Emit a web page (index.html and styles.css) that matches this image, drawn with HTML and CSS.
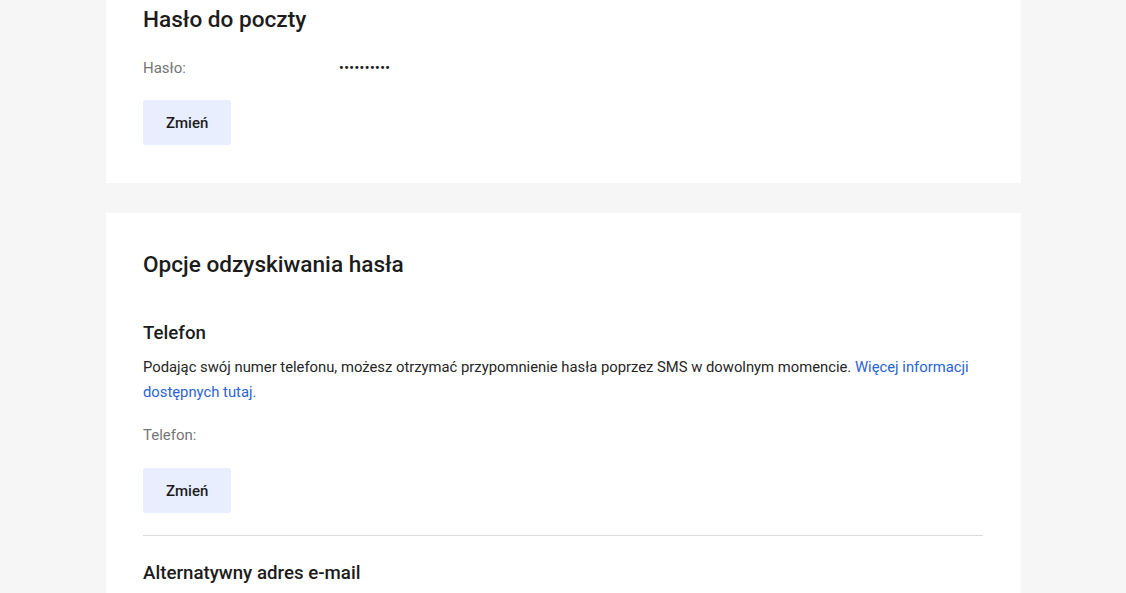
FILE: index.html
```html
<!DOCTYPE html>
<html lang="pl">
<head>
<meta charset="utf-8">
<title>Ustawienia</title>
<link rel="stylesheet" href="styles.css">
</head>
<body>
<main class="page">
  <section class="card card-first">
    <h2 class="card-title">Hasło do poczty</h2>
    <div class="field">
      <span class="field-label">Hasło:</span>
      <span class="field-value dots">••••••••••</span>
    </div>
    <button class="btn" type="button">Zmień</button>
  </section>

  <section class="card">
    <h2 class="card-title">Opcje odzyskiwania hasła</h2>
    <div class="option">
      <h3 class="option-title">Telefon</h3>
      <p class="option-text">Podając swój numer telefonu, możesz otrzymać przypomnienie hasła poprzez SMS w dowolnym momencie. <a class="link" href="#">Więcej informacji dostępnych tutaj.</a></p>
      <div class="field field-spaced">
        <span class="field-label">Telefon:</span>
        <span class="field-value"></span>
      </div>
      <button class="btn" type="button">Zmień</button>
    </div>
    <hr class="divider">
    <div class="option">
      <h3 class="option-title">Alternatywny adres e-mail</h3>
    </div>
  </section>
</main>
</body>
</html>
```

FILE: styles.css
```css
* { box-sizing: border-box; }
html, body {
  margin: 0;
  padding: 0;
  background: #f6f6f6;
  font-family: Roboto, "Liberation Sans", Arial, sans-serif;
  color: #1f1f1f;
}
.page {
  width: 915px;
  margin: 0 0 0 106px;
  display: flex;
  flex-direction: column;
  gap: 30px;
}
.card {
  background: #ffffff;
  padding: 38px 38px 38px 37px;
}
.card-first {
  margin-top: -32px;
}
.card-title {
  margin: 0;
  font-size: 22.6px;
  line-height: 28px;
  font-weight: 500;
  color: #1c1c1c;
}
.field {
  display: flex;
  align-items: center;
  margin-top: 24px;
  font-size: 15px;
  line-height: 20px;
}
.field-spaced { margin-top: 20px; }
.field-label {
  width: 196px;
  color: #757575;
}
.field-value {
  color: #1c1c1c;
}
.dots {
  font-size: 12.8px;
  letter-spacing: 0.55px;
  font-weight: 700;
}
.btn {
  display: block;
  margin-top: 22px;
  height: 45px;
  padding: 0 23px;
  border: 0;
  border-radius: 3px;
  background: #e8eefd;
  color: #1c1c1c;
  font-family: inherit;
  font-size: 15px;
  font-weight: 500;
}
.field-spaced + .btn { margin-top: 23px; }
.option-title {
  margin: 42px 0 0;
  font-size: 18.7px;
  line-height: 24px;
  font-weight: 500;
  color: #1c1c1c;
}
.divider + .option .option-title { margin-top: 25px; }
.option-text {
  margin: 10px 0 0;
  font-size: 14.8px;
  line-height: 25px;
  color: #262626;
}
.link {
  color: #2a63d4;
  text-decoration: none;
}
.divider {
  margin: 22px 0 0;
  border: 0;
  border-top: 1px solid #dcdcdc;
}
```
